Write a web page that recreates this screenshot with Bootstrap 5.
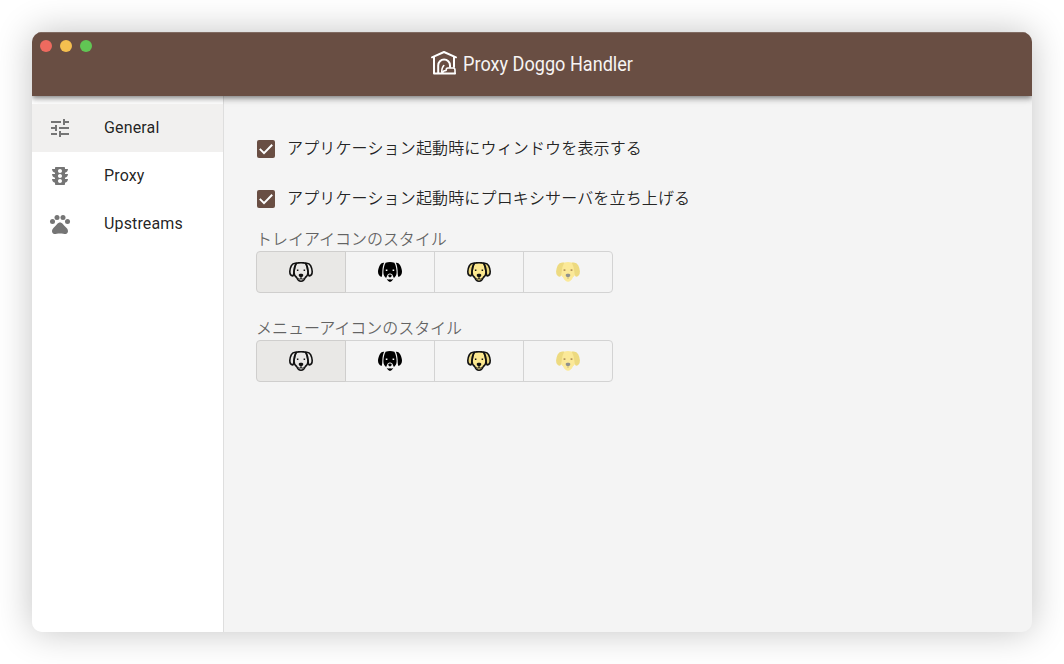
<!DOCTYPE html>
<html lang="ja">
<head>
<meta charset="utf-8">
<meta name="viewport" content="width=device-width, initial-scale=1">
<title>Proxy Doggo Handler</title>
<link href="https://cdn.jsdelivr.net/npm/bootstrap@5.3.0/dist/css/bootstrap.min.css" rel="stylesheet">
<style>
body{font-family:Roboto,"Noto Sans CJK JP",sans-serif;font-size:16px;letter-spacing:.15px;color:rgba(0,0,0,.87);background:#fff}
.app-window{width:1000px;height:600px;margin:32px;border-radius:10px;background:#f4f4f4;box-shadow:0 0 36px rgba(0,0,0,.24)}
.app-bar{height:64px;background:#694e43;box-shadow:0 2px 4px -1px rgba(0,0,0,.3),0 4px 5px rgba(0,0,0,.18),0 1px 10px rgba(0,0,0,.12);z-index:2;border-top:1px solid #806a61}
.app-title{overflow:visible}
.lights{top:7px;left:8px;gap:8px}
.lights i{width:12px;height:12px;border-radius:50%}
.side{width:192px;border-right:1px solid #dedede;padding-top:8px}
.side .list-group-item{height:48px;padding:0 0 0 16px;color:rgba(0,0,0,.87);background:#fff;border:0}
.side .list-group-item.active{background:#f1f0ef}
.side svg{width:24px;height:24px;margin-right:32px;fill:#757575}
.settings{padding:27px 32px}
.option{height:50px;gap:11px}
.option .form-check-label,.caption-text{font-family:"Noto Sans CJK JP",sans-serif;font-weight:350}
.option .form-check-label{padding-bottom:2px}
.option svg{width:20px;height:20px;margin-top:2px}
.caption-text{color:rgba(0,0,0,.6);line-height:22px;height:24px;letter-spacing:-.04px}
.icon-set{width:357px;height:42px;margin-bottom:23px}
.icon-set .btn{--bs-btn-border-color:#d3d3d3;--bs-btn-hover-bg:#eee;padding:0;width:90px;flex:1 1 0;border-radius:4px;display:flex;align-items:center;justify-content:center}
.icon-set .btn.active{--bs-btn-active-bg:#e9e8e6;--bs-btn-active-border-color:#cfcecd}
.icon-set svg{width:24px;height:20px;display:block}
</style>
<script src="https://cdn.jsdelivr.net/npm/bootstrap@5.3.0/dist/js/bootstrap.bundle.min.js"></script>
</head>
<body class="overflow-hidden">
<svg width="0" height="0" class="position-absolute" aria-hidden="true">
<defs>
<path id="earL" d="M7.200 1.300C5 .9 3.400 1.800 2.400 3.700 1.400 5.700.8 7.500.8 9.500c0 2.200 1.200 4.200 3 4.500.9-1 1.100-2.500 1.200-4.500.2-3.200.7-5.500 2.200-8.200z"/>
<path id="earR" d="M16.800 1.300c2.200-.4 3.800.5 4.800 2.400 1 2 1.600 3.800 1.600 5.800 0 2.200-1.200 4.200-3 4.500-.9-1-1.100-2.500-1.200-4.500-.2-3.200-.7-5.500-2.200-8.200z"/>
<path id="face" d="M7.200 1.300Q12-.1 16.800 1.300c1.500 2.700 2 5 2.200 8.200.2 2.500-.6 4.500-2.700 6-.9 2.400-2.300 3.700-4.300 3.700s-3.400-1.300-4.300-3.700C5.600 14 4.800 12 5 9.500c.2-3.200.7-5.500 2.200-8.200z"/>
<path id="nose" d="M9.700 12.900c0-1.500 4.600-1.500 4.600 0 0 1.300-1.200 2.300-2.300 2.300s-2.300-1-2.300-2.300z"/>
<g id="dog-line" stroke="#111" stroke-width="1.600" stroke-linejoin="round"><use href="#face"/><use href="#earL"/><use href="#earR"/><use href="#nose" fill="#111" stroke="none"/><path d="M12 15v1.700M9.300 16.300q1.300 1.500 2.700.4 1.400 1.100 2.700-.4" fill="none" stroke-width="1"/><path d="M7.900 7.400h1.500V9H7.900zM14.600 7.400h1.500V9h-1.500z" fill="#111" stroke="none"/></g>
<symbol id="d1" viewBox="0 0 24 20"><use href="#dog-line" fill="none"/></symbol>
<symbol id="d2" viewBox="0 0 24 20"><path d="M7.600.7q4.400-1.300 8.800 0c1.500 2.700 2 5.500 2.200 9 .2 3-1 5.300-2.700 6.300l-1.600-3.600q-2.300-1.600-4.600 0L8.100 16c-1.700-1-2.900-3.300-2.700-6.300.2-3.500.7-6.300 2.200-9z"/><path d="M6.200.7C4 .4 2.600 1.600 1.700 3.400.7 5.600 0 7.600 0 9.700c0 2.400 1.300 4.800 3.600 5.200.7-1.700.7-4 .8-6.400.2-3 .6-5.400 1.800-7.800zM17.800.7c2.200-.3 3.600.9 4.500 2.700 1 2.200 1.700 4.200 1.700 6.300 0 2.400-1.300 4.800-3.600 5.200-.7-1.700-.7-4-.8-6.400-.2-3-.6-5.400-1.800-7.800z"/><path d="M7.800 7.400h1.600V9H7.800zM14.600 7.400h1.600V9h-1.600z" fill="#fff"/><path d="M10.300 13.500c0-1.200 3.400-1.200 3.400 0 0 1.100-.8 1.900-1.700 1.900s-1.700-.8-1.700-1.900zM8.600 16.800q1.400 3.100 3.400 3.100t3.400-3.100q-1.200.9-2.300.6-1.100-.4-2.200 0-1.100.3-2.300-.6z"/></symbol>
<symbol id="d3" viewBox="0 0 24 20"><g fill="#fce88f"><use href="#face"/></g><g fill="#e8d57c"><use href="#earL"/><use href="#earR"/></g><use href="#dog-line" fill="none"/></symbol>
<symbol id="d4" viewBox="0 0 24 20"><use href="#face" fill="#fbe998" stroke="#fbe998"/><g fill="#edda80" stroke="#edda80" stroke-width="1.400"><use href="#earL"/><use href="#earR"/></g><use href="#nose" fill="#8f918f"/><path d="M12 15v2" stroke="#c9bd86"/><path d="M7.600 7.300h1.800V9H7.600zM14.600 7.300h1.800V9h-1.800z" fill="#b4955d"/></symbol>
<symbol id="check" viewBox="0 0 20 20"><rect x="1" y="1" width="18" height="18" rx="2" fill="#694e43"/><path d="M3.800 9.900l4.200 4.200 8.200-8.300" fill="none" stroke="#fff" stroke-width="2"/></symbol>
</defs>
</svg>
<div class="app-window d-flex flex-column overflow-hidden">
<header class="app-bar position-relative d-flex flex-shrink-0 justify-content-center">
<div class="lights position-absolute d-flex"><i style="background:#ee6a5f"></i><i style="background:#f5bf4f"></i><i style="background:#61c654"></i></div>
<svg class="app-title" width="244" height="63" viewBox="-20 0 244 63" role="img" aria-label="Proxy Doggo Handler">
<g fill="none" stroke="#fff" stroke-width="2" stroke-linejoin="round" stroke-linecap="round"><path d="M2 24.300 14 19l12 5.300M4 24v16.500M24 24v10M4 40.500h21"/><path d="M8.200 40v-7.600a5.900 5.900 0 0 1 11.800 0V34"/><path d="M12 40q-.8-4.500 1.800-7.500" stroke-width="1.600"/><path d="M12.500 40q.3-2.500 3.600-2.500 0-2.500 1.700-2.500H23q2 0 2 2v3.500" stroke-width="1.600"/></g>
<text x="33" y="38" fill="#f7f4f3" font-family="Roboto,sans-serif" font-size="20" letter-spacing="0" textLength="170" lengthAdjust="spacingAndGlyphs">Proxy Doggo Handler</text>
</svg>
</header>
<div class="d-flex flex-grow-1">
<nav class="side bg-white flex-shrink-0">
<div class="list-group list-group-flush">
<a class="list-group-item active d-flex align-items-center"><svg viewBox="0 0 24 24"><path d="M3 17v2h6v-2H3zM3 5v2h10V5H3zm10 16v-2h8v-2h-8v-2h-2v6h2zM7 9v2H3v2h4v2h2V9H7zm14 4v-2H11v2h10zm-6-4h2V7h4V5h-4V3h-2v6z"/></svg>General</a>
<a class="list-group-item d-flex align-items-center"><svg viewBox="0 0 24 24"><path d="M20 10h-3V8.860c1.720-.45 3-2 3-3.860h-3V4c0-.55-.45-1-1-1H8c-.55 0-1 .45-1 1v1H4c0 1.860 1.280 3.410 3 3.860V10H4c0 1.860 1.280 3.410 3 3.860V15H4c0 1.860 1.280 3.410 3 3.860V20c0 .55.45 1 1 1h8c.55 0 1-.45 1-1v-1.140c1.720-.45 3-2 3-3.860h-3v-1.140c1.720-.45 3-2 3-3.860zm-8 9c-1.110 0-2-.9-2-2s.89-2 2-2c1.100 0 2 .9 2 2s-.89 2-2 2zm0-5c-1.110 0-2-.9-2-2s.89-2 2-2c1.100 0 2 .9 2 2s-.89 2-2 2zm0-5c-1.110 0-2-.9-2-2s.89-2 2-2c1.100 0 2 .9 2 2s-.89 2-2 2z"/></svg>Proxy</a>
<a class="list-group-item d-flex align-items-center"><svg viewBox="0 0 24 24"><circle cx="4.500" cy="9.500" r="2.500"/><circle cx="9" cy="5.500" r="2.500"/><circle cx="15" cy="5.500" r="2.500"/><circle cx="19.500" cy="9.500" r="2.500"/><path d="M17.340 14.860c-.87-1.020-1.600-1.890-2.480-2.910-.46-.54-1.050-1.080-1.750-1.320-.11-.04-.22-.07-.33-.09-.25-.04-.52-.04-.78-.04s-.53 0-.79.050c-.11.020-.22.050-.33.090-.7.240-1.280.780-1.750 1.320-.87 1.020-1.600 1.890-2.480 2.910-1.310 1.310-2.920 2.760-2.620 4.790.29 1.020 1.020 2.030 2.330 2.320.73.150 3.060-.44 5.540-.44h.18c2.480 0 4.810.58 5.540.44 1.310-.29 2.040-1.310 2.330-2.320.31-2.040-1.300-3.490-2.610-4.800z"/></svg>Upstreams</a>
</div>
</nav>
<main class="settings flex-grow-1">
<div class="option d-flex align-items-center"><svg><use href="#check"/></svg><label class="form-check-label">アプリケーション起動時にウィンドウを表示する</label></div>
<div class="option d-flex align-items-center"><svg><use href="#check"/></svg><label class="form-check-label">アプリケーション起動時にプロキシサーバを立ち上げる</label></div>
<div class="pt-1"><div class="caption-text">トレイアイコンのスタイル</div>
<div class="btn-group icon-set d-flex"><button class="btn active"><svg><use href="#d1"/></svg></button><button class="btn"><svg><use href="#d2"/></svg></button><button class="btn"><svg><use href="#d3"/></svg></button><button class="btn"><svg><use href="#d4"/></svg></button></div>
<div class="caption-text">メニューアイコンのスタイル</div>
<div class="btn-group icon-set d-flex"><button class="btn active"><svg><use href="#d1"/></svg></button><button class="btn"><svg><use href="#d2"/></svg></button><button class="btn"><svg><use href="#d3"/></svg></button><button class="btn"><svg><use href="#d4"/></svg></button></div></div>
</main>
</div>
</div>
</body>
</html>
